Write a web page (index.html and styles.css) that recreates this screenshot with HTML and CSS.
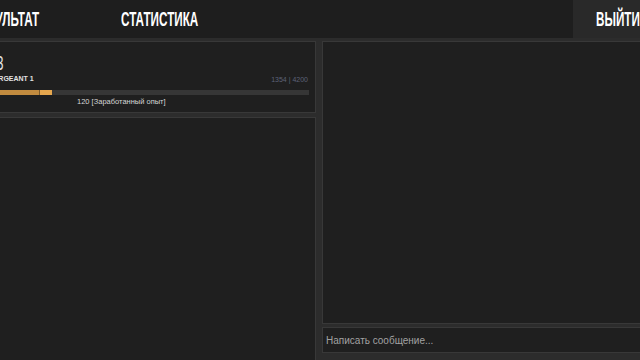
FILE: index.html
```html
<!DOCTYPE html>
<html lang="ru">

<head>
  <meta charset="UTF-8">
  <meta name="viewport" content="width=device-width, initial-scale=1.0">
  <title>Профиль</title>
  <link rel="stylesheet" href="styles.css">
</head>

<body>
<div class="page">
  <header class="topBar">
    <nav class="tabs">
      <a class="tab" href="#"><span class="tabLabel">Результат</span></a>
      <a class="tab" href="#"><span class="tabLabel">Статистика</span></a>
    </nav>
    <a class="logout" href="#"><span class="tabLabel">Выйти</span></a>
  </header>

  <main class="mainGrid">
    <section class="leftColumn">
      <div class="panel rankCard">
        <div class="level"><span class="levelNum">13</span></div>
        <div class="rankRow">
          <span class="rankName">Sergeant 1</span>
          <span class="rankXp">1354 | 4200</span>
        </div>
        <div class="xpBar">
          <div class="xpFill" style="width: 16%"></div>
          <div class="xpGain" style="width: 3.7%"></div>
        </div>
        <div class="xpNote">120 [Заработанный опыт]</div>
      </div>
      <div class="panel historyCard"></div>
    </section>

    <section class="rightColumn">
      <div class="panel chatLog"></div>
      <div class="panel chatInput">
        <input type="text" placeholder="Написать сообщение...">
      </div>
    </section>
  </main>
</div>
</body>

</html>
```

FILE: styles.css
```css
html {
  --bg: #2c2c2c;
  --panel: #1f1f1f;
  --border: #383838;
  --text: #e2e2e2;
  --muted: #a2a2a2;
  --xp: #5d6278;
  --orange: #c28b3f;
  --orangeLight: #e6a74e;
  --font: 'Liberation Sans', Arial, sans-serif;
}

* {
  box-sizing: border-box;
}

body {
  margin: 0;
  background: var(--bg);
  font-family: var(--font);
  overflow: hidden;
  height: 360px;
}

.page {
  width: 703px;
  height: 360px;
  margin-left: -40px;
}

.topBar {
  display: flex;
  align-items: stretch;
  height: 38px;
  background: #1e1e1e;
  padding-left: 13px;
}

.tabs {
  display: flex;
}

.tab {
  width: 148px;
  display: flex;
  align-items: center;
  color: #fff;
  text-decoration: none;
}

.tabLabel {
  display: inline-block;
  font-size: 20px;
  font-weight: bold;
  text-transform: uppercase;
  transform: scaleX(0.585);
  transform-origin: left center;
  white-space: nowrap;
}

.logout {
  margin-left: auto;
  width: 90px;
  padding-left: 23px;
  display: flex;
  align-items: center;
  background: #292929;
  color: #fff;
  text-decoration: none;
}

.mainGrid {
  display: grid;
  grid-template-columns: 356px 1fr;
  column-gap: 6px;
  padding-top: 3px;
}

.panel {
  background: var(--panel);
  border: 1px solid var(--border);
}

.leftColumn,
.rightColumn {
  display: flex;
  flex-direction: column;
}

.leftColumn {
  gap: 4px;
}

.rightColumn {
  gap: 3px;
}

.rankCard {
  height: 72px;
  padding: 11px 6px 0 28px;
}

.level {
  height: 20px;
  line-height: 20px;
}

.levelNum {
  display: inline-block;
  font-size: 20px;
  color: var(--text);
  transform: scaleX(0.65);
  transform-origin: left center;
}

.rankRow {
  display: flex;
  justify-content: space-between;
  align-items: flex-end;
  margin-top: 1px;
  height: 9px;
}

.rankName {
  font-size: 7px;
  line-height: 8px;
  font-weight: bold;
  color: var(--text);
  text-transform: uppercase;
}

.rankXp {
  font-size: 7px;
  line-height: 7px;
  color: var(--xp);
  padding-right: 1px;
}

.xpBar {
  display: flex;
  height: 5px;
  margin-top: 7px;
  background: #363636;
}

.xpFill {
  background: var(--orange);
  border-right: 1px solid #7a5a2c;
}

.xpGain {
  background: var(--orangeLight);
}

.xpNote {
  margin-top: 3px;
  margin-left: 88px;
  font-size: 7.5px;
  line-height: 8px;
  color: #d6d6d6;
}

.historyCard {
  height: 250px;
}

.chatLog {
  height: 283px;
}

.chatInput {
  height: 26px;
  display: flex;
}

.chatInput input {
  flex: 1;
  border: none;
  background: transparent;
  padding: 0 3px;
  font-family: var(--font);
  font-size: 10px;
  color: var(--text);
  outline: none;
}

.chatInput input::placeholder {
  color: var(--muted);
}
```
